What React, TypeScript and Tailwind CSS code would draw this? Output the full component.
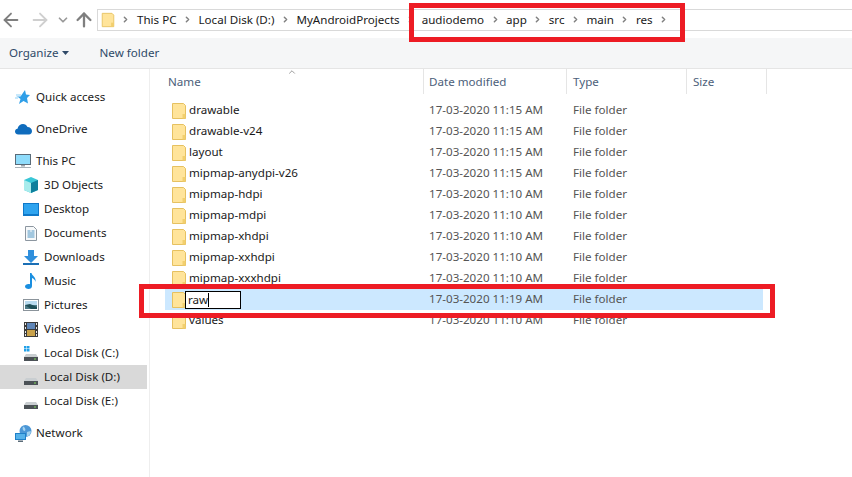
import { ArrowLeft, ArrowRight, ArrowUp, ChevronDown, ChevronRight, ChevronUp } from 'lucide-react';
import type { ReactNode } from 'react';

function Folder({ size = 18 }: { size?: number }) {
  return (
    <svg width={size} height={size} viewBox="0 0 18 18" className="shrink-0">
      <path d="M2.5 1.5h11l2 2v13h-13z" fill="#ffe49a" stroke="#e6c160" />
      <rect x="12.5" y="12" width="3" height="4.5" fill="#f2cf6e" />
    </svg>
  );
}

function Crumb({ label }: { label: string }) {
  return (
    <div className="flex items-center">
      <span>{label}</span>
      <ChevronRight className="w-[9px] h-[9px] mx-[6.5px] text-[#808080]" strokeWidth={4} />
    </div>
  );
}

const StarIcon = (
  <svg width="16" height="16" viewBox="0 0 16 16">
    <path d="M10 1l1 4.5 4 .5-3 3 1 5.5-4.500-2.500L4 15l1.500-5L3 8l-2-.5h4.500z" fill="#2f9fe8" />
    <path d="M1 6h5M0 9h3" stroke="#8fd0f5" strokeWidth="1" />
  </svg>
);
const CloudIcon = (
  <svg width="17" height="12" viewBox="0 0 17 12">
    <path d="M3.500 11.500C1 11.500 0 10 0 8.500 0 7 1.200 6 2.500 5.800 3 3 5.500 1 8 1c2 0 3.500 1 4.500 3 2.500 0 4.500 1.800 4.500 4 0 2-1.300 3.500-3 3.500z" fill="#0f6cbd" />
  </svg>
);
const MonitorIcon = (
  <svg width="16" height="16" viewBox="0 0 16 16">
    <rect x="0.500" y="1.500" width="15" height="10" fill="#8fdcfb" stroke="#5a6b78" />
    <rect x="6" y="12" width="4" height="1.500" fill="#9aa5ad" />
    <rect y="14" width="16" height="1" fill="#a9b2b8" />
  </svg>
);
const CubeIcon = (
  <svg width="16" height="16" viewBox="0 0 16 16">
    <path d="M8 0l7 3v10l-7 3-7-3V3z" fill="#39c6d6" />
    <path d="M8 6l7-3v10l-7 3z" fill="#0e7f9c" />
    <path d="M1 3l7 3v10l-7-3z" fill="#a8ecec" />
  </svg>
);
const DesktopIcon = (
  <svg width="16" height="13" viewBox="0 0 16 13">
    <rect width="16" height="13" fill="#0f78c8" />
    <rect x="1" y="1" width="14" height="10" fill="#2fa4ef" />
  </svg>
);
const DocIcon = (
  <svg width="12" height="15" viewBox="0 0 12 15" className="ml-[2px]">
    <path d="M.5.5h8l3 3v11H.500z" fill="#f7f9fa" stroke="#8c96a0" />
    <path d="M2.500 5h3M2.500 7h7M2.500 9h7M2.500 11h7M6.500 5h3" stroke="#4d95c4" />
  </svg>
);
const DownloadIcon = (
  <svg width="16" height="15" viewBox="0 0 16 15">
    <path d="M5 0h6v6h4l-7 7-7-7h4z" fill="#2f8fdc" />
    <rect y="13" width="16" height="2" fill="#1b6fb5" />
  </svg>
);
const MusicIcon = (
  <svg width="12" height="16" viewBox="0 0 12 16" className="ml-[2px]">
    <path d="M5 0h1.500c.5 3 5 4 4 9-.3-2-2-3.500-3.500-4v8c0 1.700-1.500 3-3.500 3S0 15 0 13.500 1.500 11 3.500 11c.6 0 1 .1 1.500.3z" fill="#1a8fe0" />
  </svg>
);
const PictureIcon = (
  <svg width="16" height="12" viewBox="0 0 16 12">
    <rect x=".5" y=".5" width="15" height="11" fill="#fff" stroke="#8b949b" />
    <rect x="2" y="2" width="12" height="4" fill="#b9dbef" />
    <path d="M2 6h12v4H2z" fill="#4c7a86" />
    <path d="M2 6l5-1 7 3v2H8z" fill="#1f4f57" />
  </svg>
);
const VideoIcon = (
  <svg width="14" height="15" viewBox="0 0 14 15" className="ml-[1px]">
    <rect width="14" height="15" fill="#3a3a3a" />
    <rect x="3" y="1" width="8" height="6" fill="#5f86b8" />
    <rect x="3" y="8" width="8" height="6" fill="#c9a24a" />
    <path d="M1 1h1v2H1zM1 5h1v2H1zM1 9h1v2H1zM1 12h1v2H1zM12 1h1v2h-1zM12 5h1v2h-1zM12 9h1v2h-1zM12 12h1v2h-1z" fill="#e8e8e8" />
  </svg>
);
function DiskIcon({ windows }: { windows?: boolean }) {
  return (
    <svg width="16" height="15" viewBox="0 0 16 15">
      {windows && <path d="M1 0h2.500v2.500H1zM4 0h2.500v2.500H4zM1 3h2.500v2.500H1zM4 3h2.500v2.500H4z" fill="#21a0e8" />}
      <path d="M3 8h10l2 3H1z" fill="#c9ced1" />
      <rect x="1" y="11" width="14" height="4" fill="#4b5156" />
      <rect x="11" y="12.500" width="2" height="1" fill="#7fdc5a" />
    </svg>
  );
}
const NetworkIcon = (
  <svg width="17" height="17" viewBox="0 0 17 17">
    <circle cx="10.500" cy="6" r="6" fill="#4c97d6" />
    <path d="M8 1.500c2 1 3 2.500 2 4.500-2 0-3-2-2-4.500zM12 7c2-1 3.500-1 4-.5-.5 3-2.500 4.500-4 5z" fill="#a4d3ef" />
    <rect x="0" y="8" width="11" height="7" fill="#1f80c8" />
    <rect x="1" y="9" width="9" height="5" fill="#55b2ea" />
    <rect x="3" y="15.500" width="5" height="1.500" fill="#5a6b78" />
  </svg>
);

function NavItem({ icon, label, sub, active, className = '' }: { icon: ReactNode; label: string; sub?: boolean; active?: boolean; className?: string }) {
  return (
    <div className={`flex items-center h-[24px] w-[147px] ${sub ? 'pl-[23px]' : 'pl-[15px]'} ${active ? 'bg-[#d9d9d9]' : ''} ${className}`}>
      <div className="w-[21px] flex items-center justify-start shrink-0">{icon}</div>
      <span>{label}</span>
    </div>
  );
}

const files = [
  ['drawable', '17-03-2020 11:15 AM'],
  ['drawable-v24', '17-03-2020 11:15 AM'],
  ['layout', '17-03-2020 11:15 AM'],
  ['mipmap-anydpi-v26', '17-03-2020 11:15 AM'],
  ['mipmap-hdpi', '17-03-2020 11:10 AM'],
  ['mipmap-mdpi', '17-03-2020 11:10 AM'],
  ['mipmap-xhdpi', '17-03-2020 11:10 AM'],
  ['mipmap-xxhdpi', '17-03-2020 11:10 AM'],
  ['mipmap-xxxhdpi', '17-03-2020 11:10 AM'],
  ['raw', '17-03-2020 11:19 AM'],
  ['values', '17-03-2020 11:10 AM'],
];

export default function App() {
  return (
    <div className="relative w-[852px] h-[477px] overflow-hidden bg-white text-[11.6px] leading-[16px] text-[#1a1a1a] font-['Noto_Sans',sans-serif]">
      {/* Address row */}
      <div className="flex items-center h-[38px] pt-[1px]">
        <div className="flex items-center w-[97px] shrink-0">
          <ArrowLeft className="w-[22px] h-[22px] text-[#7f7f7f]" strokeWidth={2} />
          <ArrowRight className="w-[22px] h-[22px] ml-[7px] text-[#cfcfcf]" strokeWidth={2} />
          <ChevronDown className="w-[14px] h-[14px] ml-[5px] text-[#9a9a9a]" strokeWidth={3} />
          <ArrowUp className="w-[22px] h-[22px] ml-[3px] text-[#7f7f7f]" strokeWidth={2.500} />
        </div>
        <div className="flex items-center h-[22px] flex-1 border-y border-l border-[#d9d9d9] pl-[2px]">
          <Folder size={16} />
          <ChevronRight className="w-[9px] h-[9px] ml-[5px] mr-[7px] text-[#808080]" strokeWidth={4} />
          <Crumb label="This PC" />
          <Crumb label="Local Disk (D:)" />
          <Crumb label="MyAndroidProjects" />
          <Crumb label="audiodemo" />
          <Crumb label="app" />
          <Crumb label="src" />
          <Crumb label="main" />
          <Crumb label="res" />
        </div>
      </div>

      {/* Toolbar */}
      <div className="flex items-center h-[31px] bg-[#f5f6f7] border-b border-[#e5e5e5] pl-[9px] text-[#2f4a68]">
        <span>Organize</span>
        <svg width="7" height="4" viewBox="0 0 7 4" className="ml-[3px]">
          <path d="M0 0h7L3.500 4z" fill="#2f4a68" />
        </svg>
        <span className="ml-[31px]">New folder</span>
      </div>

      <div className="flex">
        {/* Nav pane */}
        <div className="w-[150px] h-[408px] border-r border-[#eeeeee] pt-[16px] shrink-0">
          <NavItem icon={StarIcon} label="Quick access" />
          <NavItem icon={CloudIcon} label="OneDrive" className="mt-[8px]" />
          <NavItem icon={MonitorIcon} label="This PC" className="mt-[8px]" />
          <NavItem icon={CubeIcon} label="3D Objects" sub />
          <NavItem icon={DesktopIcon} label="Desktop" sub />
          <NavItem icon={DocIcon} label="Documents" sub />
          <NavItem icon={DownloadIcon} label="Downloads" sub />
          <NavItem icon={MusicIcon} label="Music" sub />
          <NavItem icon={PictureIcon} label="Pictures" sub />
          <NavItem icon={VideoIcon} label="Videos" sub />
          <NavItem icon={<DiskIcon windows />} label="Local Disk (C:)" sub />
          <NavItem icon={<DiskIcon />} label="Local Disk (D:)" sub active />
          <NavItem icon={<DiskIcon />} label="Local Disk (E:)" sub />
          <NavItem icon={NetworkIcon} label="Network" className="mt-[8px]" />
        </div>

        {/* File list */}
        <div className="flex-1 pl-[15px]">
          <div className="relative flex h-[25px] text-[#4c607a]">
            <ChevronUp className="absolute left-[122px] -top-[2px] w-[10px] h-[10px] text-[#8a8a8a]" strokeWidth={2} />
            <div className="w-[259px] pl-[3px] flex items-center border-r border-[#e5e5e5]">Name</div>
            <div className="w-[143px] pl-[5px] flex items-center border-r border-[#e5e5e5]">Date modified</div>
            <div className="w-[120px] pl-[6px] flex items-center border-r border-[#e5e5e5]">Type</div>
            <div className="w-[80px] pl-[6px] flex items-center border-r border-[#e5e5e5]">Size</div>
          </div>
          <div className="pt-[6px] w-[598px] text-[#555555]">
            {files.map(([name, date]) => {
              const renaming = name === 'raw';
              return (
                <div key={name} className={`flex items-center h-[21px] ${renaming ? 'bg-[#cce8ff]' : ''}`}>
                  <div className="flex items-center w-[264px] pl-[5px] shrink-0">
                    <Folder />
                    {renaming ? (
                      <div className="flex items-center h-[18px] w-[56px] ml-[-3px] border border-black bg-white pl-[2px] text-[#1a1a1a]">
                        raw
                        <span className="w-px h-[14px] bg-black" />
                      </div>
                    ) : (
                      <span className="pl-[1px] pb-[2px] text-[#1a1a1a]">{name}</span>
                    )}
                  </div>
                  <div className="w-[144px] shrink-0 pb-[2px]">{date}</div>
                  <div className="pb-[2px]">File folder</div>
                </div>
              );
            })}
          </div>
        </div>
      </div>

      {/* Red annotations */}
      <div className="absolute left-[409px] top-[3px] w-[276px] h-[39px] border-[5px] border-[#ed1c24]" />
      <div className="absolute left-[139px] top-[284px] w-[636px] h-[34px] border-[5px] border-[#ed1c24]" />
    </div>
  );
}
